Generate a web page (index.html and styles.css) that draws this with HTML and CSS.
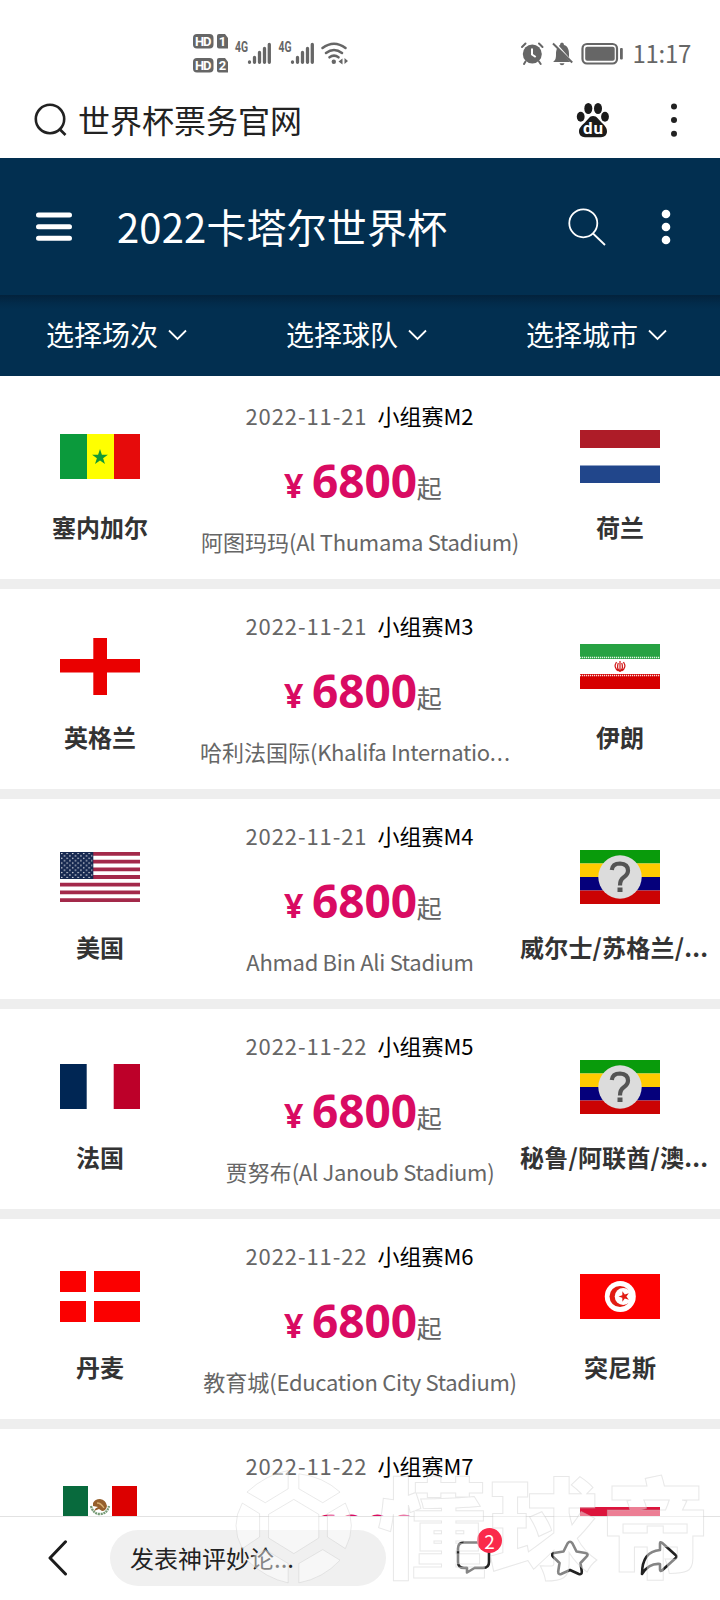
FILE: index.html
```html
<!DOCTYPE html>
<html lang="zh-CN">
<head>
<meta charset="utf-8">
<title>2022卡塔尔世界杯</title>
<link rel="stylesheet" href="styles.css">
</head>
<body>
<div class="page">
  <header class="status">
    <svg class="status-left" width="160" height="46" viewBox="0 0 160 46">
      <g fill="#666">
        <rect x="3" y="4" width="20.500" height="14.500" rx="4"/>
        <path d="M29 4h6l3 4v10.500h-9a2 2 0 0 1-2-2v-10.500a2 2 0 0 1 2-2z"/>
        <rect x="3" y="28" width="20.500" height="14.500" rx="4"/>
        <path d="M29 28h6l3 4v10.500h-9a2 2 0 0 1-2-2v-10.500a2 2 0 0 1 2-2z"/>
      </g>
      <g class="hd"><text x="5" y="15.700" textLength="16.500">HD</text><text x="5" y="39.700" textLength="16.500">HD</text><text x="28.800" y="16">1</text><text x="28.800" y="40">2</text></g>
      <g class="net"><text x="45" y="21.500" textLength="13" lengthAdjust="spacingAndGlyphs">4G</text><text x="88.500" y="21.500" textLength="13" lengthAdjust="spacingAndGlyphs">4G</text></g>
      <g stroke="#666" stroke-width="3.300" stroke-linecap="round">
        <path d="M59.500 32v.3M64.500 27.500v4.800M69.500 22.500v9.800M74.500 18.500v13.800M79.300 14.500v17.800M102.500 32v.3M107.500 27.500v4.800M112.500 22.500v9.800M117.500 18.500v13.800M122.300 14.500v17.800"/>
      </g>
      <g fill="none" stroke="#666" stroke-width="2.600" stroke-linecap="round"><path d="M132.500 18q11.500-8.500 23 0M136 23q8-6 16 0M139.500 27.300q4.500-3.200 9 0"/></g>
      <circle cx="143.800" cy="31.800" r="2.200" fill="#666"/><path d="M152.500 28.500v6l-4-3zM154.500 28v6l3.500-3z" fill="#666"/>
    </svg>
    <div class="status-right">
      <svg width="108" height="26" viewBox="0 0 108 26">
        <circle cx="12.300" cy="14" r="9.500" fill="#666"/>
        <path d="M2 7l3.500-3.500M22.500 7L19 3.500M5.500 21.500L4 24M19 21.500l1.700 2.500" stroke="#666" stroke-width="2" stroke-linecap="round"/>
        <path d="M12 8.500v6l3.700 2.500" fill="none" stroke="#fff" stroke-width="2"/>
        <path d="M33 22c3-2 3-5 3-8 0-5 2-8 4-9q0-2.500 2-2.500t2 2.500c4 1 5 5 5 9 0 4 0 6 3 8zM39.500 23.200h5q-.5 2-2.500 2t-2.500-2z" fill="#666"/>
        <path d="M34.500 2.500l18 20.500" stroke="#fff" stroke-width="2"/><path d="M33 3.500l19.200 19" stroke="#666" stroke-width="2"/>
        <rect x="62.500" y="4" width="34.500" height="19.500" rx="4.500" fill="none" stroke="#666" stroke-width="2.200"/>
        <rect x="65.200" y="6.700" width="29.500" height="14" rx="2" fill="#666"/><rect x="100" y="8" width="2.800" height="11.500" rx="1" fill="#666"/>
      </svg>
      <span class="clock">11:17</span>
    </div>
  </header>

  <div class="search">
    <svg width="34" height="34" viewBox="0 0 34 34" fill="none" stroke="#222" stroke-width="2.600"><circle cx="16" cy="16" r="14.200"/><path d="M25.500 26l6 6"/></svg>
    <span class="search-text">世界杯票务官网</span>
    <svg class="paw" width="34" height="36" viewBox="0 0 34 36" fill="#1b1b1b">
      <ellipse cx="12.300" cy="6.500" rx="4" ry="5.500"/><ellipse cx="22" cy="6.500" rx="4" ry="5.500"/><ellipse cx="4.700" cy="14.700" rx="3.900" ry="5"/><ellipse cx="29" cy="14.700" rx="3.900" ry="5"/>
      <path d="M17 14c4 0 5.500 3.500 8.500 6.500 3 3 5.500 5 5.500 9 0 3.500-2.500 5.700-6 5.700H9c-3.500 0-6-2.200-6-5.700 0-4 3-6 6-9s4.500-6.500 8-6.500z"/>
      <text class="du" x="7" y="31.500" textLength="20">du</text>
    </svg>
    <svg width="8" height="34" viewBox="0 0 8 34" fill="#222"><circle cx="4" cy="3.500" r="3"/><circle cx="4" cy="17" r="3"/><circle cx="4" cy="30.700" r="3"/></svg>
  </div>

  <div class="titlebar">
    <svg width="36" height="30" viewBox="0 0 36 30" stroke="#fff" stroke-width="5" stroke-linecap="round"><path d="M2.500 3h31M2.500 14.700h31M2.500 26.300h31"/></svg>
    <h1>2022卡塔尔世界杯</h1>
    <svg class="find" width="38" height="38" viewBox="0 0 38 38" fill="none" stroke="#fff" stroke-width="1.800"><circle cx="15.300" cy="15.300" r="14"/><path d="M25 25.500l12 11.500"/></svg>
    <svg width="10" height="36" viewBox="0 0 10 36" fill="#fff"><circle cx="5" cy="5" r="4.300"/><circle cx="5" cy="18" r="4.300"/><circle cx="5" cy="31" r="4.300"/></svg>
  </div>

  <nav class="filters">
    <div class="filter">选择场次<svg width="19" height="12" viewBox="0 0 19 12"><path d="M1 1.500l8.500 8.500L18 1.500"/></svg></div>
    <div class="filter">选择球队<svg width="19" height="12" viewBox="0 0 19 12"><path d="M1 1.500l8.500 8.500L18 1.500"/></svg></div>
    <div class="filter">选择城市<svg width="19" height="12" viewBox="0 0 19 12"><path d="M1 1.500l8.500 8.500L18 1.500"/></svg></div>
  </nav>

  <main class="list">
    <section class="match">
      <div class="team"><div class="flag"><svg width="80" height="45" viewBox="0 0 80 45"><path fill="#0b9a3c" d="M0 0h27v45H0z"/><path fill="#ff0" d="M27 0h27v45H27z"/><path fill="#e60b0b" d="M54 0h26v45H54z"/><path fill="#129a35" d="M40 15l1.900 5.700h6l-4.800 3.500 1.900 5.800-5-3.500-5 3.500 1.900-5.800-4.800-3.500h6z"/></svg></div><div class="name">塞内加尔</div></div>
      <div class="info"><div class="when"><time>2022-11-21</time><b>小组赛M2</b></div><div class="price"><i>¥</i><strong>6800</strong><small>起</small></div><div class="venue">阿图玛玛<span>(Al Thumama Stadium)</span></div></div>
      <div class="team"><div class="flag"><svg width="80" height="53" viewBox="0 0 80 53"><path fill="#ae1c28" d="M0 0h80v18H0z"/><path fill="#21468b" d="M0 35.500h80V53H0z"/></svg></div><div class="name">荷兰</div></div>
    </section>
    <section class="match">
      <div class="team"><div class="flag"><svg width="80" height="57" viewBox="0 0 80 57"><path fill="#ea0000" d="M33.300 0h13.700v57H33.300z"/><path fill="#ea0000" d="M0 21h80v13.500H0z"/></svg></div><div class="name">英格兰</div></div>
      <div class="info"><div class="when"><time>2022-11-21</time><b>小组赛M3</b></div><div class="price"><i>¥</i><strong>6800</strong><small>起</small></div><div class="venue cut">哈利法国际<span>(Khalifa Internatio</span><span class="dots">...</span></div></div>
      <div class="team"><div class="flag"><svg width="80" height="45" viewBox="0 0 80 45"><path fill="#27a243" d="M0 0h80v15H0z"/><path fill="#d60000" d="M0 30h80v15H0z"/><path stroke="#e8f5e8" stroke-width="1.500" stroke-dasharray="1.200 .8" d="M0 13.500h80"/><path stroke="#fbe0e0" stroke-width="1.500" stroke-dasharray="1.200 .8" d="M0 31.500h80"/><path fill="none" stroke="#d01515" stroke-width="1.200" d="M40 17v11M36.500 18q-3.500 5.500 2 9M43.500 18q3.500 5.500-2 9M38.300 19q-2 5 1.200 8M41.700 19q2 5-1.200 8"/></svg></div><div class="name">伊朗</div></div>
    </section>
    <section class="match">
      <div class="team"><div class="flag"><svg width="80" height="50" viewBox="0 0 80 50"><defs><pattern id="stars" width="5.500" height="4.800" patternUnits="userSpaceOnUse"><circle cx="1.700" cy="1.500" r=".75" fill="#fff"/><circle cx="4.500" cy="3.900" r=".75" fill="#fff"/></pattern></defs><path fill="#fff" d="M0 0h80v50H0z"/><path stroke="#a3294a" stroke-width="3.850" d="M0 1.920h80M0 9.620h80M0 17.310h80M0 25h80M0 32.690h80M0 40.380h80M0 48.080h80"/><path fill="#162850" d="M0 0h33.300v26.900H0z"/><path fill="url(#stars)" d="M1 1h31.500v25H1z"/></svg></div><div class="name">美国</div></div>
      <div class="info"><div class="when"><time>2022-11-21</time><b>小组赛M4</b></div><div class="price"><i>¥</i><strong>6800</strong><small>起</small></div><div class="venue"><span>Ahmad Bin Ali Stadium</span></div></div>
      <div class="team"><div class="flag tbd"><svg width="80" height="54" viewBox="0 0 80 54"><path fill="#099b0b" d="M0 0h80v13.500H0z"/><path fill="#ffcb00" d="M0 13.500h80V27H0z"/><path fill="#05007b" d="M0 27h80v13.500H0z"/><path fill="#cb0303" d="M0 40.500h80V54H0z"/><circle cx="40" cy="27" r="21.700" fill="#dcdcdc"/><path fill="none" stroke="#555" stroke-width="4.200" d="M31.800 20q.7-6.500 8.200-6.500 8 .5 8 7 0 4-4.500 7Q40 30 40 35.500"/><path fill="#555" d="M37.500 37.500h5v4.500h-5z"/></svg></div><div class="name cut">威尔士/苏格兰/...</div></div>
    </section>
    <section class="match">
      <div class="team"><div class="flag"><svg width="80" height="45" viewBox="0 0 80 45"><path fill="#002654" d="M0 0h26.700v45H0z"/><path fill="#bd0029" d="M53.700 0H80v45H53.700z"/></svg></div><div class="name">法国</div></div>
      <div class="info"><div class="when"><time>2022-11-22</time><b>小组赛M5</b></div><div class="price"><i>¥</i><strong>6800</strong><small>起</small></div><div class="venue">贾努布<span>(Al Janoub Stadium)</span></div></div>
      <div class="team"><div class="flag tbd"><svg width="80" height="54" viewBox="0 0 80 54"><path fill="#099b0b" d="M0 0h80v13.500H0z"/><path fill="#ffcb00" d="M0 13.500h80V27H0z"/><path fill="#05007b" d="M0 27h80v13.500H0z"/><path fill="#cb0303" d="M0 40.500h80V54H0z"/><circle cx="40" cy="27" r="21.700" fill="#dcdcdc"/><path fill="none" stroke="#555" stroke-width="4.200" d="M31.800 20q.7-6.500 8.200-6.500 8 .5 8 7 0 4-4.500 7Q40 30 40 35.500"/><path fill="#555" d="M37.500 37.500h5v4.500h-5z"/></svg></div><div class="name cut">秘鲁/阿联酋/澳...</div></div>
    </section>
    <section class="match">
      <div class="team"><div class="flag"><svg width="80" height="51" viewBox="0 0 80 51"><path fill="#fb0000" d="M0 0h26v21H0zM34 0h46v21H34zM0 30h26v21H0zM34 30h46v21H34z"/></svg></div><div class="name">丹麦</div></div>
      <div class="info"><div class="when"><time>2022-11-22</time><b>小组赛M6</b></div><div class="price"><i>¥</i><strong>6800</strong><small>起</small></div><div class="venue">教育城<span>(Education City Stadium)</span></div></div>
      <div class="team"><div class="flag"><svg width="80" height="45" viewBox="0 0 80 45"><path fill="#fd0000" d="M0 0h80v45H0z"/><circle cx="40.300" cy="22.500" r="15.500" fill="#fff"/><circle cx="40" cy="22.500" r="10.500" fill="#e11b12"/><circle cx="43.200" cy="22.500" r="8.500" fill="#fff"/><path fill="#e11b12" d="M38.500 22.500l3.800-1.300.1-4 2.400 3.200 4-1.200-2.400 3.300 2.400 3.300-4-1.200-2.400 3.200-.1-4z"/></svg></div><div class="name">突尼斯</div></div>
    </section>
    <section class="match">
      <div class="team"><div class="flag"><svg width="74" height="42" viewBox="0 0 74 42"><path fill="#086a3d" d="M0 0h25v42H0z"/><path fill="#dc0000" d="M49 0h25v42H49z"/><path fill="#96602d" d="M30 17q2-4 7-4 6 1 7 7-1 5-5 5l-3-2-5 2q1-3 4-4l-5-1z"/><path fill="none" stroke="#d7ae70" stroke-width="1.300" d="M34 17q4 0 7 5"/><path fill="none" stroke="#769b76" stroke-width="2.300" stroke-dasharray="2 .7" d="M28 20q2 8 9 8t9-8"/></svg></div></div>
      <div class="info"><div class="when"><time>2022-11-22</time><b>小组赛M7</b></div><div class="price"><i>¥</i><strong>6800</strong><small>起</small></div></div>
      <div class="team"><div class="flag"><svg width="80" height="50" viewBox="0 0 80 50"><path fill="#dc143c" d="M0 25h80v25H0z"/></svg></div></div>
    </section>
  </main>

  <footer class="toolbar">
    <svg class="back" width="20" height="36" viewBox="0 0 20 36"><path d="M17.500 1.800L2 18l15.500 16" fill="none" stroke="#1c1c1c" stroke-width="3" stroke-linecap="round" stroke-linejoin="round"/></svg>
    <div class="comment">发表神评妙论...</div>
    <div class="chat">
      <svg width="36" height="36" viewBox="0 0 36 36" fill="none" stroke="#222" stroke-width="2.600" stroke-linejoin="round"><path d="M8 2.500h19q6 0 6 6V22q0 6-6 6h-8.500L11 32.500V28H8q-6 0-6-6V8.500q0-6 6-6z"/></svg>
      <span class="badge">2</span>
    </div>
    <svg class="fav" width="38" height="36" viewBox="0 0 38 36" fill="none" stroke="#222" stroke-width="2.600" stroke-linejoin="round"><path d="M16.500 3.500q2.500-3.500 5 0l4 8 9 1.500q3.500 1 1 3.700L29.500 23l1.300 8.500q0 3.500-3 2.500L19 30l-8.800 4q-3 1-3-2.500L8.500 23 2 16.700q-2.500-2.700 1-3.700l9.500-1.500z"/></svg>
    <svg width="38" height="36" viewBox="0 0 38 36" fill="none" stroke="#222" stroke-width="2.600" stroke-linejoin="round"><path d="M20 10V3.500q0-2 2-.7L35.500 15q2 1.500 0 3.200L22 30.500q-2 1-2-1V24Q9 23 2 34 2 11.500 20 10z"/></svg>
  </footer>

  <div class="watermark">
    <svg width="123" height="120" viewBox="700 140 370 360"><path d="M866 150Q800 162 742 215L797 247 866 205zM898 160Q970 168 1022 215L970 247 898 205zM728 248Q690 315 728 385L780 350V280zM1038 248Q1074 315 1038 385L984 350V280zM866 488Q800 475 742 420L797 388 866 430zM898 488Q970 475 1022 420L970 388 898 430zM883 237L958 282V353L883 400 807 353V282z"/></svg>
    <span class="brand">懂球帝</span>
  </div>
</div>
</body>
</html>
```
FILE: styles.css
```css
* { box-sizing: border-box; }
body {
  margin: 0;
  background: #fff;
  font-family: "Noto Sans CJK SC", "Noto Sans", sans-serif;
}
svg { display: block; flex: none; }
.page {
  position: relative;
  display: flex;
  flex-direction: column;
  width: 720px;
  height: 1600px;
  overflow: hidden;
}

.status {
  display: flex;
  justify-content: space-between;
  height: 88px;
  padding: 30px 29px 0 190px;
}
.hd { font: bold 13px Roboto, sans-serif; fill: #fff; }
.net { font: bold 14px Roboto, sans-serif; fill: #666; }
.status-right { display: flex; padding-top: 10px; }
.clock {
  margin: -4px 0 0 5px;
  color: #666;
  font-size: 24px;
  line-height: 34px;
  letter-spacing: -0.3px;
  white-space: nowrap;
}

.search {
  display: flex;
  align-items: center;
  height: 70px;
  padding: 0 42px 6px 34px;
}
.search-text { margin-left: 10px; color: #222; font-size: 32px; line-height: 48px; margin-top: -3px; }
.paw { margin: 0 60px 0 auto; }
.du { font: bold 17px Roboto, sans-serif; fill: #fff; }

.titlebar {
  display: flex;
  align-items: center;
  height: 137px;
  padding: 0 49px 0 36px;
  background: #022f50;
  color: #fff;
}
.titlebar h1 { margin: -2px 0 0 45px; font-size: 40px; font-weight: 400; line-height: 60px; letter-spacing: 0.15px; white-space: nowrap; }
.titlebar .find { margin: 0 55px 0 auto; }

.filters {
  display: grid;
  grid-template-columns: repeat(3, 1fr);
  height: 81px;
  background: linear-gradient(#03223c, #022b4a 8px, #022f50 14px);
  color: #fff;
}
.filter {
  display: flex;
  align-items: center;
  justify-content: center;
  gap: 10px;
  padding: 0 7px 4px 0;
  font-size: 28px;
  line-height: 40px;
}
.filter svg { fill: none; stroke: #fff; stroke-width: 1.8; margin-top: 3px; }

.list { flex: 1; min-height: 0; overflow: hidden; padding-top: 3px; }
.match {
  display: grid;
  grid-template-columns: 200px 320px 200px;
  height: 210px;
  border-bottom: 10px solid #eee;
}
.team { padding-top: 47.5px; }
.flag { display: flex; align-items: center; justify-content: center; height: 60px; }
.flag.tbd { padding-top: 1px; }
.name {
  margin-top: 22.5px;
  color: #333;
  font-size: 24px;
  font-weight: 700;
  line-height: 36px;
  text-align: center;
  white-space: nowrap;
}
.name.cut { text-align: left; letter-spacing: 0.2px; }
.info { padding-top: 20px; }
.when { display: flex; gap: 10px; height: 32px; padding-left: 45.5px; font-size: 22px; line-height: 32px; white-space: nowrap; }
.when time { color: #666; letter-spacing: 0.9px; }
.when b { color: #000; font-weight: 400; }
.price {
  display: flex;
  align-items: baseline;
  height: 60px;
  margin-top: 19px;
  padding-left: 84px;
  color: #d90b62;
  font-family: "Noto Sans", sans-serif;
  line-height: 60px;
}
.price i { font-size: 34px; font-style: normal; font-weight: 700; line-height: 1; width: 28px; }
.price strong { font-size: 46px; letter-spacing: -0.1px; }
.price small { color: #666; font-family: "Noto Sans CJK SC", sans-serif; font-size: 25px; line-height: 1; }
.venue { height: 32px; margin-top: 15px; color: #666; font-size: 22px; line-height: 32px; text-align: center; white-space: nowrap; }
.venue.cut { text-align: left; }
.venue span { letter-spacing: -0.3px; }
.venue .dots { letter-spacing: 1px; }

.toolbar {
  display: flex;
  align-items: center;
  height: 84px;
  padding: 0 0 1px 48px;
  border-top: 1px solid #e2e2e2;
  background: #fff;
}
.comment {
  width: 276px;
  height: 56px;
  margin-left: 42px;
  padding-left: 20px;
  border-radius: 28px;
  background: #f0f0f0;
  color: #222;
  font-size: 24px;
  line-height: 56px;
}
.chat { position: relative; margin-left: 70px; }
.badge {
  position: absolute;
  left: 21px;
  top: -12px;
  width: 25px;
  height: 25px;
  border-radius: 50%;
  background: #fa2a4b;
  color: #fff;
  font-size: 19px;
  line-height: 25px;
  text-align: center;
}
.fav { margin: 0 51px 0 59px; }

.watermark {
  position: absolute;
  left: 233px;
  top: 1467px;
  display: flex;
  pointer-events: none;
}
.watermark path { fill: rgba(255, 255, 255, 0.45); stroke: rgba(190, 190, 190, 0.4); stroke-width: 2.5; stroke-linejoin: round; }
.brand {
  margin-left: 21px;
  color: rgba(255, 255, 255, 0.45);
  font-size: 109px;
  font-weight: 900;
  line-height: 112px;
  letter-spacing: 3px;
  white-space: nowrap;
  -webkit-text-stroke: 1px rgba(190, 190, 190, 0.35);
}
```
